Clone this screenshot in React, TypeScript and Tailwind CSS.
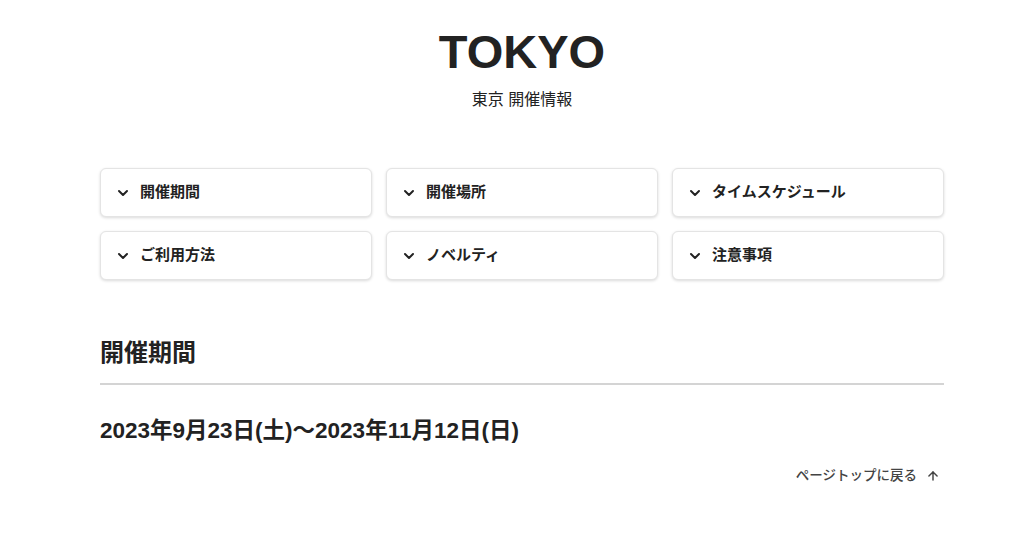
import { ChevronDown, ArrowUp } from "lucide-react"

const items = ["開催期間", "開催場所", "タイムスケジュール", "ご利用方法", "ノベルティ", "注意事項"]

const App = () => {
  return (
    <div className="min-h-[533px] bg-white pl-[20px] text-[#222] font-['Liberation_Sans','Noto_Sans_CJK_JP',sans-serif]">
      <header className="flex flex-col items-center pt-[26px]">
        <h1 className="text-[47px] font-bold leading-[52px]">TOKYO</h1>
        <p className="mt-[12px] text-[16px] leading-[20px]">東京 開催情報</p>
      </header>

      <div className="mx-auto w-[844px] mt-[58px] grid grid-cols-3 gap-x-[14px] gap-y-[14px]">
        {items.map((t) => (
          <button
            key={t}
            className="flex h-[49px] items-center gap-[9px] rounded-[6px] border border-[#e4e4e4] bg-white px-[14px] text-left text-[15px] font-semibold shadow-[0_1px_3px_rgba(0,0,0,0.15)]"
          >
            <ChevronDown size={16} strokeWidth={3} />
            {t}
          </button>
        ))}
      </div>

      <section className="mx-auto w-[844px] mt-[57px]">
        <h2 className="text-[24px] font-semibold leading-[32px] pb-[14px] border-b-2 border-[#d4d4d4]">開催期間</h2>
        <p className="mt-[32px] text-[22.5px] font-semibold leading-[28px]">2023年9月23日(土)〜2023年11月12日(日)</p>
        <div className="mt-[21px] flex justify-end pr-[4px]">
          <a className="flex items-center gap-[9px] text-[13.5px] font-medium text-[#444]" href="#">
            ページトップに戻る
            <ArrowUp size={14} strokeWidth={2.5} />
          </a>
        </div>
      </section>
    </div>
  )
}

export default App
